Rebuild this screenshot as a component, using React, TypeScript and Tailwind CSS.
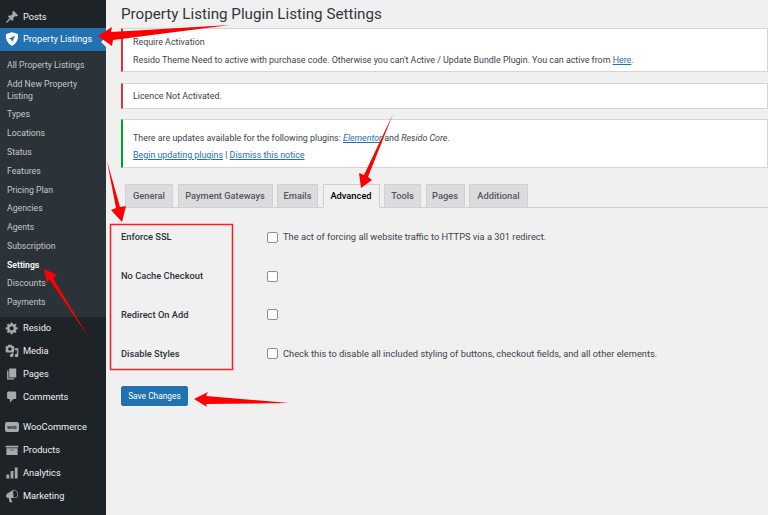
import React from 'react';

const icons: Record<string, string> = {
  post: 'M10.44 3.02l1.82-1.82 6.36 6.35-1.83 1.82c-1.05-.68-2.48-.57-3.41.36l-.75.75c-.92.93-1.04 2.35-.35 3.41l-1.83 1.82-2.41-2.41-2.8 2.79c-.42.42-3.38 2.71-3.8 2.29s1.86-3.39 2.28-3.81l2.79-2.79L4.1 9.36l1.83-1.82c1.05.69 2.48.57 3.4-.36l.75-.75c.93-.92 1.05-2.35.36-3.41z',
  gear: 'M18 12h-2.18c-.17.7-.44 1.35-.81 1.93l1.54 1.54-2.1 2.1-1.54-1.54c-.58.36-1.23.63-1.91.79V19H8v-2.18c-.68-.16-1.33-.43-1.91-.79l-1.54 1.54-2.12-2.12 1.54-1.54c-.36-.58-.63-1.23-.79-1.91H1V9.03h2.17c.16-.7.44-1.35.8-1.94L2.43 5.55l2.1-2.1 1.54 1.54c.58-.37 1.24-.64 1.93-.81V2h3v2.18c.68.16 1.33.43 1.91.79l1.54-1.54 2.12 2.12-1.54 1.54c.36.59.64 1.24.8 1.94H18V12zm-8.5 1.5c1.66 0 3-1.34 3-3s-1.34-3-3-3-3 1.34-3 3 1.34 3 3 3z',
  media: 'M13 11V4c0-.55-.45-1-1-1h-1.67L9 1H5L3.67 3H2c-.55 0-1 .45-1 1v7c0 .55.45 1 1 1h10c.55 0 1-.45 1-1zM7 4.5c1.38 0 2.5 1.12 2.5 2.5S8.38 9.5 7 9.5 4.5 8.38 4.5 7 5.62 4.5 7 4.5zM14 6h5v10.5c0 1.38-1.12 2.5-2.5 2.5S14 17.88 14 16.5s1.12-2.5 2.5-2.5c.17 0 .34.02.5.05V9h-3V6zm-4 8.05V13h2v3.5c0 1.38-1.12 2.5-2.5 2.5S7 17.88 7 16.5 8.12 14 9.5 14c.17 0 .34.02.5.05z',
  pages: 'M6 15V2h10v13H6zm-1 1h8v2H3V5h2v11z',
  comments: 'M5 2h9c1.1 0 2 .9 2 2v7c0 1.1-.9 2-2 2h-2l-5 5v-5H5c-1.1 0-2-.9-2-2V4c0-1.1.9-2 2-2z',
  products: 'M19 4v2.5H1V4h18zM2 7.5h16V17H2V7.5zm11 3V9.5H7v1h6z',
  analytics: 'M18 18V2h-4v16h4zm-6 0V7H8v11h4zm-6 0v-6H2v6h4z',
  marketing: 'M18.15 5.94c.46 1.62.38 3.22-.02 4.48-.42 1.28-1.26 2.18-2.3 2.48-.16.06-.26.06-.4.06-.06.02-.12.02-.18.02-.06.02-.14.02-.22.02h-6.8l2.22 5.5c.02.14-.06.26-.14.34-.08.1-.24.16-.34.16H6.95c-.1 0-.26-.06-.34-.16-.08-.08-.16-.2-.14-.34l-1-5.5H4.25l-.02-.02c-.5.06-1.08-.18-1.54-.62s-.88-1.08-1.06-1.88c-.24-.8-.2-1.56-.02-2.2.18-.62.58-1.08 1.06-1.3l.02-.02 9-5.4c.1-.06.18-.1.24-.16.06-.04.14-.08.24-.12.16-.08.28-.12.5-.18 1.04-.3 2.24.1 3.22 1 .98.88 1.8 2.24 2.26 3.86zm-2.58 5.98h-.02c.4-.1.74-.34 1.04-.7.58-.7.86-1.76.86-3.04-.02-.64-.1-1.3-.28-1.98-.34-1.36-1.02-2.5-1.78-3.24-.38-.38-.76-.66-1.14-.84-.38-.16-.74-.22-1.08-.14-1.04.28-1.78 1.52-1.92 3.08.08.34.22.7.32 1.08.28.98.46 1.96.54 2.86.04.9 0 1.72-.14 2.44.34.4.78.74 1.22.9z',
};

const Icon = ({ name }: { name: string }) => (
  <svg viewBox="0 0 20 20" className="w-[14px] h-[14px] shrink-0" fill="#a7aaad">
    <path d={icons[name]} />
  </svg>
);

const MenuItem = ({ name, label }: { name: string; label: string }) => (
  <div className="h-[23px] flex items-center pl-[5px] gap-[4px] text-[#f0f0f1]">
    <Icon name={name} />
    <span>{label}</span>
  </div>
);

const subItems = ['All Property Listings', 'Add New Property Listing', 'Types', 'Locations', 'Status', 'Features', 'Pricing Plan', 'Agencies', 'Agents', 'Subscription', 'Settings', 'Discounts', 'Payments'];

const tabs = [
  { label: 'General', width: 'w-[48px]' },
  { label: 'Payment Gateways', width: 'w-[95px]' },
  { label: 'Emails', width: 'w-[41px]' },
  { label: 'Advanced', width: 'w-[57px]' },
  { label: 'Tools', width: 'w-[37px]' },
  { label: 'Pages', width: 'w-[39px]' },
  { label: 'Additional', width: 'w-[59px]' },
];

const rows = [
  { label: 'Enforce SSL', desc: 'The act of forcing all website traffic to HTTPS via a 301 redirect.' },
  { label: 'No Cache Checkout', desc: '' },
  { label: 'Redirect On Add', desc: '' },
  { label: 'Disable Styles', desc: 'Check this to disable all included styling of buttons, checkout fields, and all other elements.' },
];

const Sidebar = () => (
  <div className="w-[106px] shrink-0 bg-[#1d2327] pt-[5px] text-[9.25px]">
    <MenuItem name="post" label="Posts" />
    <div className="relative h-[22.5px] bg-[#2271b1] flex items-center pl-[5px] gap-[4px] text-white text-[9.2px]">
      <svg viewBox="0 0 20 20" className="w-[14px] h-[14px] shrink-0">
        <path d="M10 1l8 2.500c.4 6.500-2 12-8 15.500C4 15.500 1.600 10 2 3.500z" fill="#fff" stroke="#fff" strokeWidth="1.500" strokeLinejoin="round" />
        <path d="M14.500 5.500L5.500 9.500l3.500 1.200 1.200 3.500z" fill="#2271b1" />
      </svg>
      <span>Property Listings</span>
      <div className="absolute right-0 top-[9px] border-y-[5px] border-y-transparent border-r-[5px] border-r-[#f0f0f1]" />
    </div>
    <div className="bg-[#2c3338] pt-[5px] pb-[5px] pl-[7px] pr-[4px] text-[#c3c6c9] text-[8.7px] leading-[12px]">
      {subItems.map((item) => (
        <div
          key={item}
          className={`py-[3.4px] ${item === 'Settings' ? 'text-white font-semibold' : ''}`}
        >
          {item}
        </div>
      ))}
    </div>
    <MenuItem name="gear" label="Resido" />
    <MenuItem name="media" label="Media" />
    <MenuItem name="pages" label="Pages" />
    <MenuItem name="comments" label="Comments" />
    <div className="h-[7px]" />
    <div className="h-[23px] flex items-center pl-[5px] gap-[4px] text-[#f0f0f1]">
      <div className="w-[14px] h-[10px] shrink-0 rounded-[2px] bg-[#a7aaad] text-[#1d2327] text-[5px] leading-[10px] text-center font-bold">woo</div>
      <span>WooCommerce</span>
    </div>
    <MenuItem name="products" label="Products" />
    <MenuItem name="analytics" label="Analytics" />
    <MenuItem name="marketing" label="Marketing" />
  </div>
);

const Annotations = () => (
  <svg className="absolute left-0 top-0 pointer-events-none" width="768" height="515" viewBox="0 0 768 515">
    <g fill="#fe0000">
      <polygon points="98,36 112,27 111,32 230,25 113,40 112,46" />
      <polygon points="393,114 368,177 372,180 361,188 359,173 364,175" />
      <polygon points="107,161 120,207 126,206 122,222 111,210 116,208" />
      <polygon points="44,269 57,275 53,278 89,338 49,279 47,283" />
      <polygon points="194,399 208,392 206,396 289,403 206,404 207,407" />
    </g>
    <rect x="110.500" y="224.500" width="122" height="145" fill="none" stroke="#fb1c24" strokeWidth="1.500" />
  </svg>
);

export default function App() {
  return (
    <div className="relative flex w-[768px] h-[515px] overflow-hidden bg-[#f0f0f1] font-['Roboto',sans-serif] text-[9.3px] text-[#3c434a]">
      <Sidebar />
      <div className="flex-1 pl-[15px]">
        <h1 className="h-[28px] flex items-center text-[15.2px] text-[#32373c]">Property Listing Plugin Listing Settings</h1>

        <div className="h-[44px] pt-[2px] bg-white border border-[#d5d5d7] border-l-[2.5px] border-l-[#d63638] pl-[10px] flex flex-col justify-center gap-[6px] leading-[12px] text-[8.9px]">
          <div>Require Activation</div>
          <div>
            Resido Theme Need to active with purchase code. Otherwise you can't Active / Update Bundle Plugin. You can active from{' '}
            <span className="text-[#2271b1] underline">Here</span>.
          </div>
        </div>

        <div className="mt-[11px] h-[26px] pt-[1px] bg-white border border-[#d5d5d7] border-l-[2.5px] border-l-[#d63638] pl-[10px] flex items-center text-[8.9px]">
          Licence Not Activated.
        </div>

        <div className="mt-[10px] h-[49px] pt-[6px] bg-white border border-[#d5d5d7] border-l-[2.5px] border-l-[#00a32a] pl-[10px] flex flex-col justify-center gap-[5px] leading-[12px] text-[8.9px]">
          <div>
            There are updates available for the following plugins: <span className="italic text-[#2271b1] underline">Elementor</span> and <span className="italic">Resido Core</span>.
          </div>
          <div>
            <span className="text-[#2271b1] underline">Begin updating plugins</span> | <span className="text-[#2271b1] underline">Dismiss this notice</span>
          </div>
        </div>

        <div className="mt-[16px] h-[24px] pl-[4px] flex gap-[4.500px] border-b border-[#d0d0d2] font-medium">
          {tabs.map((tab) => (
            <div
              key={tab.label}
              className={
                tab.label === 'Advanced'
                  ? `${tab.width} h-[24px] flex items-center justify-center border border-[#d0d0d2] border-b-[#f0f0f1] bg-[#f0f0f1] text-black`
                  : `${tab.width} h-[24px] flex items-center justify-center border border-[#d0d0d2] bg-[#dcdcde] text-[#50575e]`
              }
            >
              {tab.label}
            </div>
          ))}
        </div>

        <div className="mt-[10px]">
          {rows.map((row) => (
            <div key={row.label} className="h-[38.800px] flex items-center">
              <div className="w-[146px] font-medium text-[#2c3338]">{row.label}</div>
              <div className="w-[11px] h-[11px] rounded-[2px] border border-[#8c8f94] bg-white shrink-0" />
              <div className="ml-[5px]">{row.desc}</div>
            </div>
          ))}
        </div>

        <button className="mt-[13px] h-[20px] w-[67px] bg-[#2271b1] border border-[#2271b1] rounded-[2px] text-white text-[8.4px]">Save Changes</button>
      </div>
      <Annotations />
    </div>
  );
}
